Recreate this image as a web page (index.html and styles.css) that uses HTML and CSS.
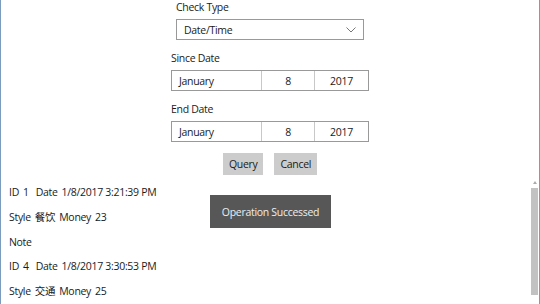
FILE: index.html
```html
<!DOCTYPE html>
<html lang="en">
<head>
  <meta charset="UTF-8">
  <meta name="viewport" content="width=device-width, initial-scale=1.0">
  <title>Records</title>
  <link rel="stylesheet" href="styles.css">
</head>
<body>

<div class="form">
  <div class="label indent">Check Type</div>
  <div class="combo">
    <span>Date/Time</span>
    <svg class="chevron" width="10" height="6" viewBox="0 0 10 6"><path d="M0.5 0.5 L5 5 L9.5 0.5" fill="none" stroke="#777" stroke-width="1"/></svg>
  </div>

  <div class="label gap">Since Date</div>
  <div class="date-picker">
    <span class="month">January</span>
    <span class="day">8</span>
    <span class="year">2017</span>
  </div>

  <div class="label gap">End Date</div>
  <div class="date-picker">
    <span class="month">January</span>
    <span class="day">8</span>
    <span class="year">2017</span>
  </div>

  <div class="buttons">
    <button class="btn">Query</button>
    <button class="btn">Cancel</button>
  </div>
</div>

<div class="list">
  <div class="row"><span>ID</span><span class="num">1</span><span>Date</span><span>1/8/2017 3:21:39 PM</span></div>
  <div class="row"><span>Style</span><span>餐饮</span><span>Money</span><span>23</span></div>
  <div class="row"><span>Note</span></div>
  <div class="row"><span>ID</span><span class="num">4</span><span>Date</span><span>1/8/2017 3:30:53 PM</span></div>
  <div class="row"><span>Style</span><span>交通</span><span>Money</span><span>25</span></div>

  <div class="toast">Operation Successed</div>

  <div class="scrollbar">
    <span class="arrow"></span>
    <span class="thumb"></span>
  </div>
</div>

</body>
</html>
```

FILE: styles.css
```css
/* Page */
body {
  margin: 0;
  height: 304px;
  overflow: hidden;
  border-left: 1px solid #7b9cbd;
  border-right: 1px solid #7b9cbd;
  background-color: #fff;
  color: #1a1a1a;
  font-family: "Open Sans", "Noto Sans CJK SC", sans-serif;
  font-size: 10.5px;
  letter-spacing: -0.3px;
}

/* Query form */
.form {
  width: 198px;
  margin: 0 auto;
}

.label {
  line-height: 15px;
  margin-bottom: 4px;
}

.label.indent {
  padding-left: 5px;
}

.label.gap {
  margin-top: 11px;
}

.combo {
  display: flex;
  justify-content: space-between;
  align-items: center;
  box-sizing: border-box;
  width: 188px;
  height: 21px;
  margin-left: 5px;
  padding: 0 7px;
  border: 1px solid #999;
}

.date-picker {
  display: grid;
  grid-template-columns: 90px 53px 1fr;
  box-sizing: border-box;
  height: 21px;
  border: 1px solid #999;
}

.date-picker span {
  display: flex;
  align-items: center;
}

.date-picker .month {
  padding-left: 7px;
  border-right: 1px solid #c8c8c8;
}

.date-picker .day {
  justify-content: center;
  border-right: 1px solid #c8c8c8;
}

.date-picker .year {
  justify-content: center;
}

.buttons {
  display: flex;
  justify-content: center;
  gap: 11px;
  margin-top: 11px;
}

.btn {
  height: 22px;
  padding: 0 6px;
  border: none;
  background-color: #cccccc;
  color: #1a1a1a;
  font-family: inherit;
  font-size: inherit;
  letter-spacing: inherit;
}

/* Results list */
.list {
  position: relative;
  margin-top: 5px;
  padding-left: 8px;
}

.row {
  display: flex;
  gap: 4px;
  line-height: 24.75px;
}

.row .num {
  padding-right: 3px;
}

.toast {
  position: absolute;
  left: 209px;
  top: 15px;
  width: 121px;
  height: 33px;
  display: flex;
  align-items: center;
  justify-content: center;
  background-color: #575757;
  color: #eee;
}

.scrollbar {
  position: absolute;
  right: 1px;
  top: 1px;
  width: 7px;
  height: 114px;
  display: flex;
  flex-direction: column;
  align-items: center;
}

.scrollbar .arrow {
  width: 0;
  height: 0;
  margin-bottom: 4px;
  border-left: 2px solid transparent;
  border-right: 2px solid transparent;
  border-bottom: 3px solid #aaa;
}

.scrollbar .thumb {
  flex: 1;
  width: 7px;
  background-color: #c2c2c2;
}
```
